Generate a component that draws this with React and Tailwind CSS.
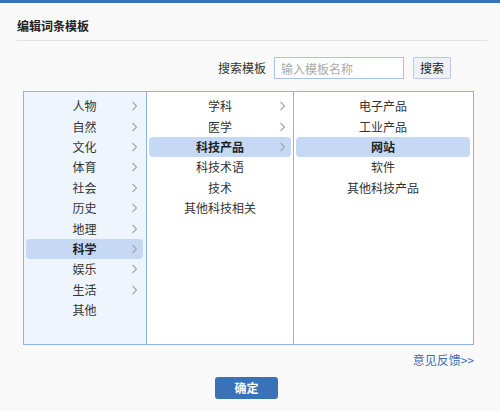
import React from 'react';

const col1 = ['人物', '自然', '文化', '体育', '社会', '历史', '地理', '科学', '娱乐', '生活', '其他'];
const col2 = ['学科', '医学', '科技产品', '科技术语', '技术', '其他科技相关'];
const col3 = ['电子产品', '工业产品', '网站', '软件', '其他科技产品'];
const col1Arrow = 10; // first 10 rows have sub-items
const col2Arrow = 3;

const Chevron = () => (
  <svg width="7" height="11" viewBox="0 0 7 11" className="absolute right-[5px] top-1/2 -translate-y-1/2">
    <polyline points="1.5,1.5 5.5,5.5 1.5,9.5" fill="none" stroke="#a6a6a6" strokeWidth="1.1" />
  </svg>
);

const Row = ({ label, active, arrow }) => (
  <div
    className={`relative flex h-[20.4px] items-center justify-center rounded-[4px] text-[12px] ${
      active ? 'bg-[#c5d9f4] font-bold text-[#1f1f1f]' : 'text-[#333]'
    }`}
  >
    {label}
    {arrow && <Chevron />}
  </div>
);

export default function App() {
  return (
    <div
      className="h-[411px] w-[500px] overflow-hidden border-t-[3px] border-[#3b72be] bg-[#f9f9f9]"
      style={{ fontFamily: '"Noto Sans CJK SC", "Liberation Sans", sans-serif' }}
    >
      {/* Header */}
      <div className="ml-[17px] mr-[13px] border-b border-[#e2e2e2] pb-[4px] pt-[13px]">
        <h1 className="text-[12px] font-bold leading-[20px] text-[#222]">编辑词条模板</h1>
      </div>

      {/* Search */}
      <div className="mt-[16px] flex items-center justify-end pr-[49px]">
        <span className="text-[12px] text-[#333]">搜索模板</span>
        <input
          className="ml-[8px] h-[22px] w-[130px] border border-[#a9c2e6] bg-white px-[6px] text-[12px] outline-none placeholder:text-[#aaa]"
          placeholder="输入模板名称"
        />
        <button className="ml-[9px] h-[22px] w-[38px] rounded-[2px] border border-[#b7c9e4] bg-[#eef2f8] text-[12px] text-[#222]">
          搜索
        </button>
      </div>

      {/* Category panel */}
      <div className="ml-[23px] mt-[12px] flex h-[254px] w-[451px] border border-[#8fb2ea] bg-white">
        <div className="flex w-[122px] flex-col bg-[#eef5fd] pl-[2px] pr-[3px] pt-[4px]">
          {col1.map((t, i) => (
            <Row key={t} label={t} active={t === '科学'} arrow={i < col1Arrow} />
          ))}
        </div>
        <div className="flex w-[147px] flex-col border-l border-[#8fb2ea] px-[2px] pt-[4px]">
          {col2.map((t, i) => (
            <Row key={t} label={t} active={t === '科技产品'} arrow={i < col2Arrow} />
          ))}
        </div>
        <div className="flex flex-1 flex-col border-l border-[#8fb2ea] pl-[2px] pr-[3px] pt-[4px]">
          {col3.map((t) => (
            <Row key={t} label={t} active={t === '网站'} />
          ))}
        </div>
      </div>

      <div className="mt-[7px] flex w-[474px] justify-end">
        <a className="cursor-pointer text-[12px] leading-[16px] text-[#3d6fb6]">意见反馈&gt;&gt;</a>
      </div>

      <div className="ml-[215px] mt-[9px] flex">
        <button className="h-[22px] w-[63px] rounded-[3px] bg-[#3a72b8] text-[12px] font-bold text-white">
          确定
        </button>
      </div>
    </div>
  );
}
